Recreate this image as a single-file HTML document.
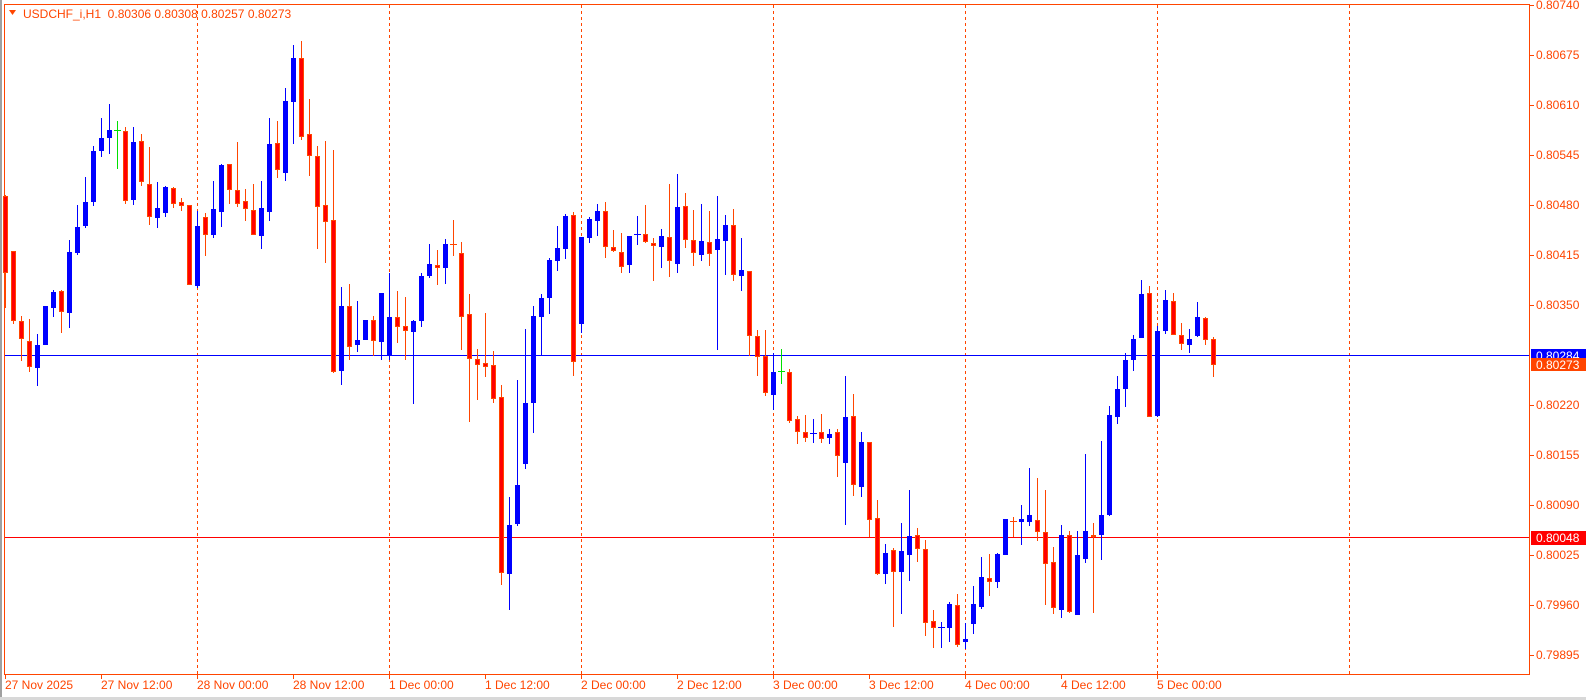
<!DOCTYPE html>
<html><head><meta charset="utf-8"><style>
html,body{margin:0;padding:0;background:#fff;width:1586px;height:700px;overflow:hidden}
svg{display:block}
text{font-family:"Liberation Sans",sans-serif;font-size:12px}
</style></head><body>
<svg id="s" width="1586" height="700" xmlns="http://www.w3.org/2000/svg">
<rect x="0" y="0" width="1586" height="700" fill="#fff"/>
<rect x="0" y="0" width="2" height="700" fill="#a0a0a0"/>
<rect x="0" y="697" width="1586" height="3" fill="#d8d8d8"/>
<g id="grid" stroke="#ff4500" stroke-width="1" stroke-dasharray="3,3"></g>
<line x1="4.5" y1="4.5" x2="1529.5" y2="4.5" stroke="#ff4500"/>
<line x1="4.5" y1="4" x2="4.5" y2="674.5" stroke="#ff4500"/>
<line x1="1529.5" y1="4" x2="1529.5" y2="674.5" stroke="#ff4500"/>
<line x1="4" y1="674.5" x2="1530" y2="674.5" stroke="#ff4500"/>
<line x1="5" y1="355.5" x2="1529" y2="355.5" stroke="#0000ff"/>
<line x1="5" y1="537.5" x2="1529" y2="537.5" stroke="#ff0000"/>
<g id="c"></g>
<g id="ax"></g>
<polygon points="9,10 16,10 12.5,15" fill="#ff4500"/>
<text x="23" y="18" fill="#ff4500" xml:space="preserve">USDCHF_i,H1  0.80306 0.80308 0.80257 0.80273</text>
<rect x="1531" y="349" width="55" height="11" fill="#0000ff"/>
<text x="1536" y="360" fill="#fff">0.80284</text>
<rect x="1531" y="358" width="55" height="13" fill="#ff4500"/>
<text x="1536" y="369" fill="#fff">0.80273</text>
<rect x="1531" y="531" width="55" height="14" fill="#ff0000"/>
<text x="1536" y="542" fill="#fff">0.80048</text>
</svg>
<script>
var NS="http://www.w3.org/2000/svg";
function el(p,n,a,t){var e=document.createElementNS(NS,n);for(var k in a)e.setAttribute(k,a[k]);if(t)e.textContent=t;p.appendChild(e);return e;}
var g=document.getElementById('grid');
[197,389,581,773,965,1157,1349].forEach(function(x){el(g,'line',{x1:x+.5,y1:5,x2:x+.5,y2:674});});
var ax=document.getElementById('ax');
var pl=[[80740,5],[80675,55],[80610,105],[80545,155],[80480,205],[80415,255],[80350,305],[80220,405],[80155,455],[80090,505],[80025,555],[79960,605],[79895,655]];
pl.forEach(function(p){el(ax,'line',{x1:1530,y1:p[1]+.5,x2:1534,y2:p[1]+.5,stroke:'#ff4500'});el(ax,'text',{x:1536,y:p[1]+4,fill:'#ff4500'},'0.'+p[0]);});
var tl=['27 Nov 2025','27 Nov 12:00','28 Nov 00:00','28 Nov 12:00','1 Dec 00:00','1 Dec 12:00','2 Dec 00:00','2 Dec 12:00','3 Dec 00:00','3 Dec 12:00','4 Dec 00:00','4 Dec 12:00','5 Dec 00:00'];
tl.forEach(function(t,i){var x=5+96*i;el(ax,'line',{x1:x+.5,y1:675,x2:x+.5,y2:679,stroke:'#ff4500'});el(ax,'text',{x:x,y:689,fill:'#ff4500'},t);});
var D=[
['r',195,308,196,273],['r',251,324,251,321],['r',316,361,321,339],['r',319,372,341,367],['b',334,386,345,368],
['b',306,345,306,345],['b',290,317,292,308],['r',290,333,291,312],['b',240,328,252,313],['b',205,255,227,253],
['b',177,228,202,226],['b',146,206,151,202],['b',118,157,138,151],['b',104,154,130,138],['g',121,169,130,130],
['r',127,204,131,201],['b',127,205,142,200],['r',134,186,141,182],['r',147,225,184,217],['b',182,228,208,218],
['b',186,217,187,213],['r',187,208,188,204],['r',198,211,202,206],['r',205,285,205,285],['b',211,288,226,286],
['r',213,256,217,235],['b',181,238,209,235],['b',164,227,165,212],['r',164,204,164,190],['r',142,207,190,204],
['r',189,221,201,209],['r',184,235,210,235],['b',181,249,208,236],['b',118,221,144,212],['r',121,178,143,170],
['b',88,181,101,173],['b',45,144,58,102],['r',41,140,58,137],['r',99,176,134,156],['r',146,249,156,207],
['r',141,263,205,222],['r',150,373,220,372],['b',287,385,306,371],['r',284,360,306,347],['b',301,352,340,345],
['b',320,340,320,340],['r',316,356,320,341],['b',293,360,293,342],['b',273,360,317,355],['r',291,343,317,327],
['r',297,360,326,331],['b',320,404,321,332],['b',273,327,276,321],['b',244,278,264,276],['r',250,285,265,268],
['b',239,284,244,268],['r',220,256,244,244],['r',242,350,253,317],['r',294,422,314,359],['r',349,400,359,365],
['r',313,377,363,367],['r',351,403,365,399],['r',385,585,397,573],['b',497,610,525,574],['b',380,526,485,524],
['b',329,469,403,464],['b',306,433,316,403],['b',294,356,298,317],['b',258,314,260,298],['b',226,271,248,261],
['b',214,259,216,249],['r',212,376,215,362],['b',237,333,237,324],['b',217,243,219,238],['b',204,236,211,221],
['r',202,258,211,247],['r',230,252,247,251],['r',233,273,252,267],['b',236,273,236,265],['b',216,245,234,234],
['r',205,243,234,242],['r',238,281,243,246],['b',229,268,236,247],['r',184,277,237,261],['b',174,273,207,264],
['r',193,248,206,240],['r',210,266,240,253],['b',204,261,241,255],['r',211,266,242,254],['b',196,350,239,250],
['b',215,275,225,241],['r',209,281,225,275],['b',238,291,270,276],['r',271,356,271,336],['r',330,376,336,357],
['r',330,396,356,393],['b',353,410,372,395],['g',349,384,371,371],['r',369,423,372,421],['r',416,444,419,432],
['r',415,442,432,438],['b',419,443,433,433],['r',414,443,432,439],['b',429,444,434,438],['r',429,477,432,456],
['b',376,525,417,463],['r',394,496,416,485],['b',432,497,442,487],['r',442,537,442,520],['r',500,575,518,574],
['b',544,584,553,574],['r',548,627,550,572],['b',523,614,551,572],['b',490,581,536,555],['r',528,562,535,549],
['r',540,636,549,623],['r',610,648,621,628],['b',622,648,627,627],['b',602,642,604,628],['r',594,647,605,645],
['b',623,649,639,642],['b',586,634,604,624],['b',557,609,577,607],['r',554,596,578,582],['b',553,588,554,582],
['b',519,555,519,555],['r',517,537,521,521],['b',505,545,519,522],['b',468,526,515,522],['r',478,541,520,532],
['r',490,605,532,564],['r',547,614,562,608],['b',525,618,535,610],['r',531,613,535,612],['b',531,615,555,615],
['b',454,563,531,559],['r',523,613,535,537],['b',441,560,515,535],['b',406,516,415,515],['b',376,424,389,417],
['b',353,407,360,389],['b',335,371,339,360],['b',280,338,294,338],['r',286,417,293,417],['b',326,417,331,416],
['b',290,334,300,331],['r',293,335,301,335],['r',323,350,335,344],['b',329,353,339,345],['b',302,337,317,336],
['r',317,345,318,340],['r',337,377,339,365]
];
var c=document.getElementById('c');
D.forEach(function(d,i){
 var x=Math.round(5.3+8*i);var t=d[0];
 var wc=t=='b'?'#0000ff':(t=='g'?'#00e000':'#ff4500');
 el(c,'rect',{x:x,y:d[1],width:1,height:Math.max(1,d[2]-d[1]),fill:wc});
 var h=d[4]-d[3];
 if(t=='g'){el(c,'rect',{x:x-3,y:d[3],width:7,height:1,fill:wc});return;}
 if(h<2){el(c,'rect',{x:x-3,y:d[3],width:7,height:1,fill:wc});return;}
 if(t=='b'){el(c,'rect',{x:x-2,y:d[3],width:5,height:h,fill:'#0000ff'});}
 else{el(c,'rect',{x:x-2,y:d[3],width:5,height:h,fill:'#ff4500'});
  if(h>2)el(c,'rect',{x:x-1,y:d[3]+1,width:3,height:h-2,fill:'#ff0000'});}
});
</script>
</body></html>
